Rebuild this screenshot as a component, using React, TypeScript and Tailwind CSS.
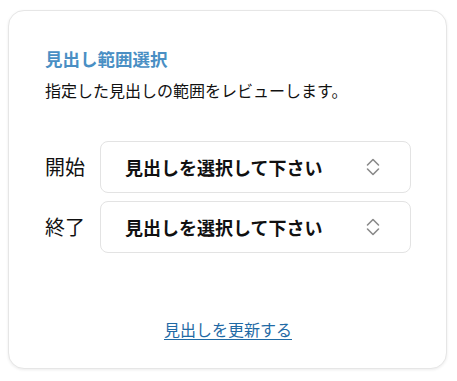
import React from "react";

function Chevrons() {
  return (
    <svg width="14" height="18" viewBox="0 0 14 18" fill="none" stroke="#8a8a8a" strokeWidth="1.6" strokeLinecap="round" strokeLinejoin="round">
      <polyline points="1.5,7 7,1.5 12.5,7" />
      <polyline points="1.5,11 7,16.5 12.5,11" />
    </svg>
  );
}

function Row({ label }: { label: string }) {
  return (
    <div className="flex items-center">
      <div className="w-[55px] shrink-0 text-[20px] leading-[28px] text-[#111]">{label}</div>
      <div className="flex h-[52px] flex-1 items-center justify-between rounded-[8px] border border-[#e3e3e3] bg-white pl-[24px] pr-[30px]">
        <span className="text-[18px] font-bold leading-[26px] text-[#111]">見出しを選択して下さい</span>
        <Chevrons />
      </div>
    </div>
  );
}

export default function App() {
  return (
    <div className="min-h-[381px] bg-white pl-[8px] pr-[10px] pt-[10px] [font-family:'Noto_Sans_CJK_JP','Noto_Sans',sans-serif]">
      <div className="flex h-[359px] flex-col rounded-[16px] border border-[#e6e6e6] bg-white pl-[36px] pr-[35px] pt-[36px] shadow-[0_1px_3px_rgba(0,0,0,0.08)]">
        <div className="text-[17.5px] font-bold leading-[24px] text-[#4a8fc4]">見出し範囲選択</div>
        <div className="mt-[8px] text-[16px] leading-[22px] text-[#111]">指定した見出しの範囲をレビューします。</div>
        <div className="mt-[40px] flex flex-col gap-[8px]">
          <Row label="開始" />
          <Row label="終了" />
        </div>
        <div className="mt-[64px] text-center">
          <a href="#" className="text-[16px] leading-[22px] text-[#1f6aa5] underline underline-offset-[3px]">見出しを更新する</a>
        </div>
      </div>
    </div>
  );
}
